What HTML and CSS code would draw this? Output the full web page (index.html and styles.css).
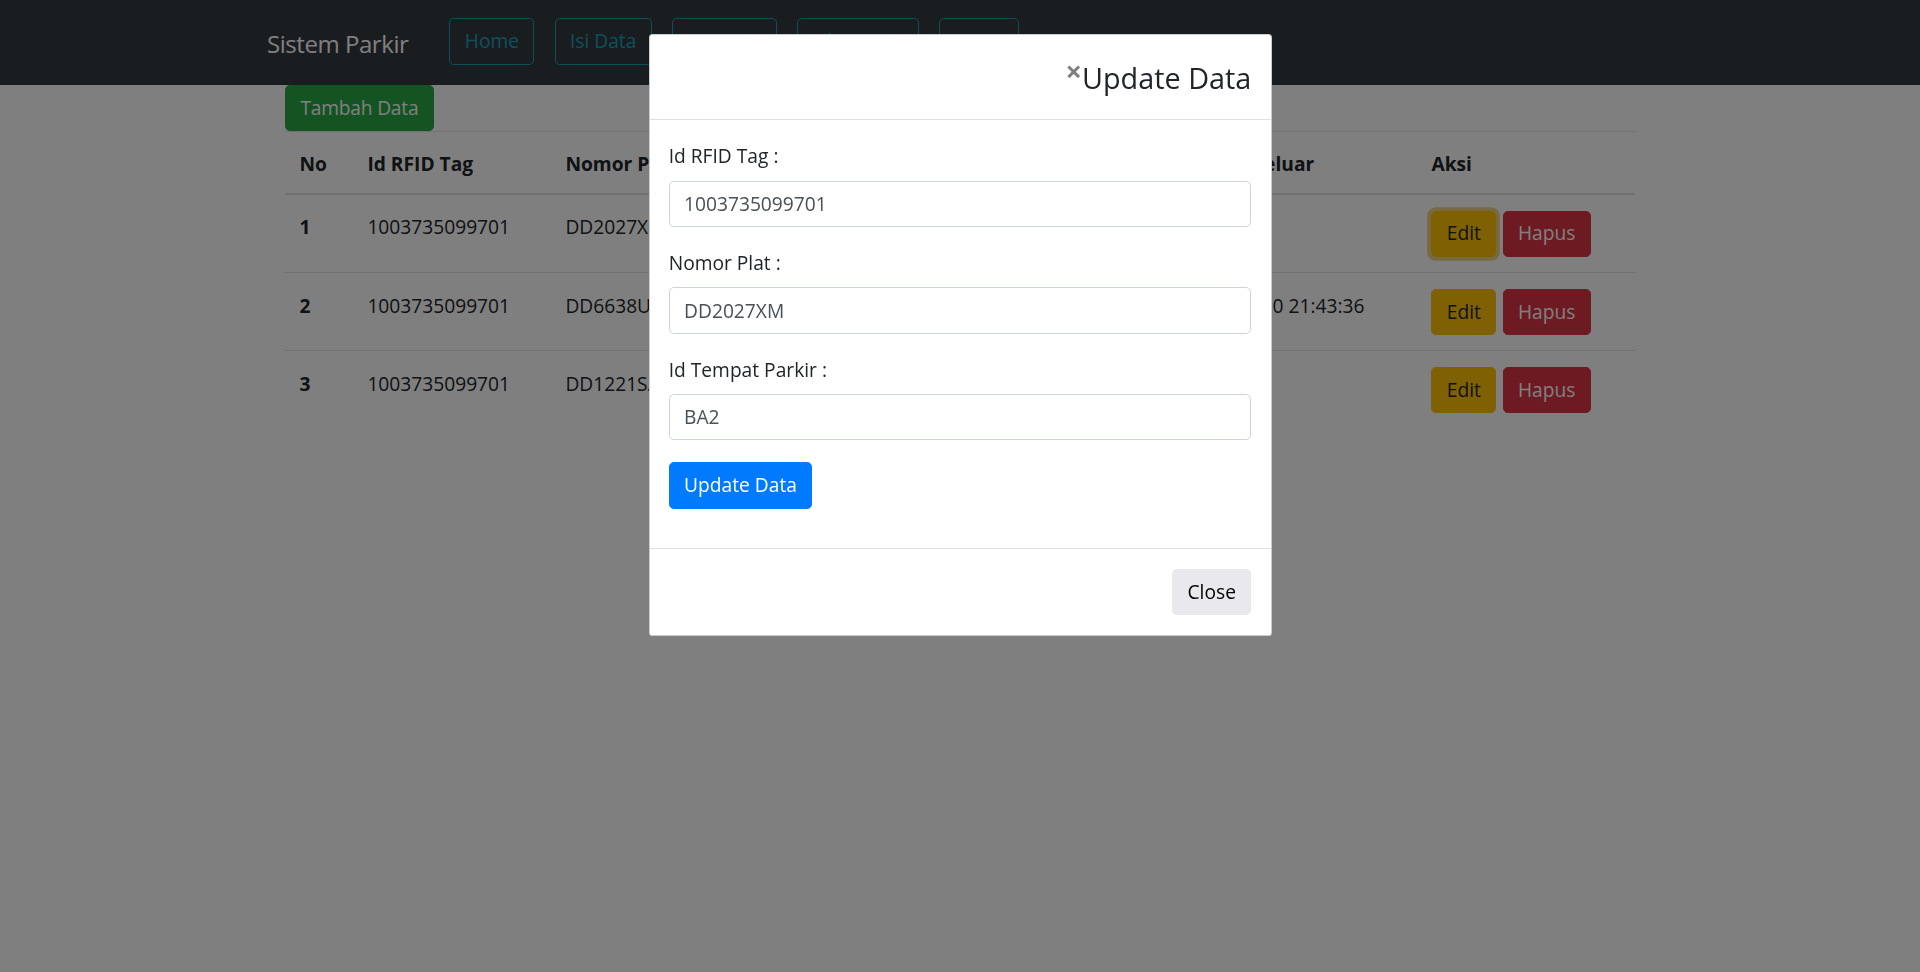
FILE: index.html
```html
<!DOCTYPE html>
<html lang="id">
<head>
<meta charset="utf-8">
<title>Sistem Parkir</title>
<link rel="stylesheet" href="styles.css">
</head>
<body>
<nav class="navbar">
  <div class="nav-inner">
    <a class="brand" href="#">Sistem Parkir</a>
    <ul class="nav-list">
      <li><a class="btn btn-outline-info" href="#">Home</a></li>
      <li><a class="btn btn-outline-info" href="#">Isi Data</a></li>
      <li><a class="btn btn-outline-info" href="#">Laporan</a></li>
      <li><a class="btn btn-outline-info" href="#">Lihat Data</a></li>
      <li><a class="btn btn-outline-info" href="#">Login</a></li>
    </ul>
  </div>
</nav>

<main class="container">
  <button class="btn btn-success btn-add">Tambah Data</button>
  <table class="table">
    <colgroup>
      <col class="c-no"><col class="c-rfid"><col class="c-plat"><col class="c-tempat"><col class="c-masuk"><col class="c-keluar"><col class="c-aksi">
    </colgroup>
    <thead>
      <tr>
        <th>No</th><th>Id RFID Tag</th><th>Nomor Plat</th><th>Id Tempat Parkir</th><th>Waktu Masuk</th><th>Waktu Keluar</th><th>Aksi</th>
      </tr>
    </thead>
    <tbody>
      <tr>
        <th class="row-no">1</th><td>1003735099701</td><td>DD2027XM</td><td>BA2</td><td>2021-06-10 21:20:11</td><td></td>
        <td class="cell-actions"><div class="actions"><button class="btn btn-warning is-focused">Edit</button><button class="btn btn-danger">Hapus</button></div></td>
      </tr>
      <tr>
        <th class="row-no">2</th><td>1003735099701</td><td>DD6638UB</td><td>BA1</td><td>2021-06-10 21:30:02</td><td>2021-06-10 21:43:36</td>
        <td class="cell-actions"><div class="actions"><button class="btn btn-warning">Edit</button><button class="btn btn-danger">Hapus</button></div></td>
      </tr>
      <tr>
        <th class="row-no">3</th><td>1003735099701</td><td>DD1221SA</td><td>BA3</td><td>2021-06-10 21:45:19</td><td></td>
        <td class="cell-actions"><div class="actions"><button class="btn btn-warning">Edit</button><button class="btn btn-danger">Hapus</button></div></td>
      </tr>
    </tbody>
  </table>
</main>

<div class="backdrop"></div>

<div class="modal">
  <div class="modal-content">
    <div class="modal-header">
      <button class="close" aria-label="Close">&times;</button>
      <h4 class="modal-title">Update Data</h4>
    </div>
    <form class="modal-body">
      <div class="form-group">
        <label class="label">Id RFID Tag :</label>
        <input class="form-control" type="text" value="1003735099701">
      </div>
      <div class="form-group">
        <label class="label">Nomor Plat :</label>
        <input class="form-control" type="text" value="DD2027XM">
      </div>
      <div class="form-group">
        <label class="label">Id Tempat Parkir :</label>
        <input class="form-control" type="text" value="BA2">
      </div>
      <button class="btn btn-primary" type="button">Update Data</button>
    </form>
    <div class="modal-footer">
      <button class="btn btn-light" type="button">Close</button>
    </div>
  </div>
</div>
</body>
</html>
```
FILE: styles.css
```css
* { box-sizing: border-box; }

html, body {
  margin: 0;
  padding: 0;
}

body {
  font-family: "Open Sans", "Noto Sans", sans-serif;
  font-size: 19.2px;
  line-height: 28.8px;
  color: #212529;
  background: #fff;
  height: 972px;
  overflow: hidden;
}

/* ---------- buttons ---------- */
.btn {
  display: inline-block;
  font-family: inherit;
  font-size: 19.2px;
  line-height: 28.8px;
  padding: 7.8px 14.4px;
  border: 1px solid transparent;
  border-radius: 4.8px;
  text-decoration: none;
  cursor: pointer;
  vertical-align: middle;
  white-space: nowrap;
}
.btn-outline-info { color: #17a2b8; border-color: #17a2b8; background: transparent; }
.btn-success { color: #fff; background: #28a745; border-color: #28a745; }
.btn-warning { color: #212529; background: #ffc107; border-color: #ffc107; }
.btn-danger { color: #fff; background: #dc3545; border-color: #dc3545; }
.btn-primary { color: #fff; background: #007bff; border-color: #007bff; }
.btn-light { color: #000; background: #e9e9ed; border-color: #e9e9ed; }
.is-focused { box-shadow: 0 0 0 3.84px rgba(222, 170, 12, 0.5); }
.btn-add { display: block; letter-spacing: -0.2px; }

/* ---------- navbar ---------- */
.navbar {
  background: #343a40;
  height: 85px;
}
.nav-inner {
  width: 1386px;
  margin: 0 auto;
  height: 100%;
  display: flex;
  align-items: center;
}
.brand {
  color: #fff;
  font-size: 24px;
  line-height: 34px;
  letter-spacing: -0.45px;
  text-decoration: none;
  margin-right: 41px;
  margin-top: 2px;
}
.nav-list {
  list-style: none;
  margin: -2px 0 0;
  padding: 0;
  display: flex;
  gap: 20.2px;
}

/* ---------- content ---------- */
.container {
  width: 1350px;
  margin: 0 auto;
}

.table {
  width: 100%;
  border-collapse: collapse;
  table-layout: fixed;
}
.c-no { width: 68px; }
.c-rfid { width: 198px; }
.c-plat { width: 199px; }
.c-tempat { width: 200px; }
.c-masuk { width: 219px; }
.c-keluar { width: 248px; }
.c-aksi { width: 218px; }

.table th, .table td {
  padding: 18.4px 14.4px 12.6px;
  border-top: 1px solid #dee2e6;
  text-align: left;
  vertical-align: top;
  white-space: nowrap;
  overflow: hidden;
}
.table thead th {
  font-weight: 700;
  vertical-align: bottom;
  padding: 17.6px 14.4px 14.3px;
  border-bottom: 2px solid #dee2e6;
}
.table .row-no { font-weight: 700; }
.table .cell-actions {
  padding: 15.6px 14.4px 15.2px;
  overflow: visible;
}

.actions {
  display: flex;
  gap: 6.3px;
}

/* ---------- modal ---------- */
.backdrop {
  position: fixed;
  inset: 0;
  background: rgba(0, 0, 0, 0.5);
}
.modal {
  position: fixed;
  inset: 0;
}
.modal-content {
  width: 623px;
  margin: 34px auto 0;
  background: #fff;
  border: 1px solid rgba(0, 0, 0, 0.2);
  border-radius: 3.6px;
}
.modal-header {
  display: flex;
  justify-content: flex-end;
  align-items: flex-start;
  padding: 25.6px 19.2px 24.1px;
  border-bottom: 1px solid #dee2e6;
}
.modal-title {
  margin: 0;
  font-size: 28.8px;
  line-height: 34.56px;
  font-weight: 400;
  color: #212529;
}
.close {
  background: none;
  border: 0;
  padding: 0;
  margin: -4px 0 0 0;
  font-family: inherit;
  font-size: 28.8px;
  line-height: 1;
  font-weight: 700;
  color: #000;
  opacity: 0.5;
  cursor: pointer;
}
.modal-body {
  padding: 22.2px 19.2px 39.7px;
  margin: 0;
}
.form-group {
  margin-bottom: 22px;
}
.label {
  display: block;
  margin-bottom: 9.4px;
}
.form-control {
  display: block;
  width: 100%;
  height: 46.4px;
  padding: 7.6px 14.4px;
  font-family: inherit;
  font-size: 19.2px;
  line-height: 28.8px;
  color: #495057;
  background: #fff;
  border: 1px solid #ced4da;
  border-radius: 4.8px;
}
.modal-footer {
  display: flex;
  justify-content: flex-end;
  padding: 19.8px 19.2px 19.2px;
  border-top: 1px solid #dee2e6;
}
```
